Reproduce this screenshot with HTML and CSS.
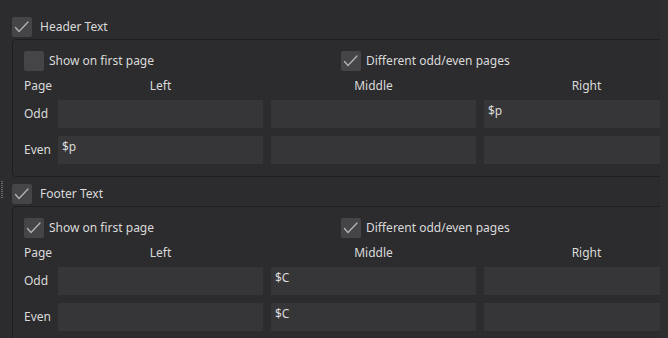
FILE: index.html
```html
<!DOCTYPE html>
<html>
<head>
<meta charset="utf-8">
<link rel="stylesheet" href="styles.css">
</head>
<body>
<div class="page">
  <div class="scroll">
    <section class="section">
      <div class="section-head">
        <span class="cb checked"><svg viewBox="0 0 20 20"><path d="M3.5 10.5 L7 14.5 L16 5"/></svg></span>
        <span class="label">Header Text</span>
      </div>
      <div class="group">
        <div class="options">
          <div class="opt first"><span class="cb"></span><span class="label">Show on first page</span></div>
          <div class="opt"><span class="cb checked"><svg viewBox="0 0 20 20"><path d="M3.5 10.5 L7 14.5 L16 5"/></svg></span><span class="label">Different odd/even pages</span></div>
        </div>
        <div class="grid">
          <div class="hdr page-col">Page</div>
          <div class="hdr">Left</div>
          <div class="hdr">Middle</div>
          <div class="hdr">Right</div>
          <div class="rowlabel">Odd</div>
          <div class="field"></div>
          <div class="field"></div>
          <div class="field">$p</div>
          <div class="rowlabel">Even</div>
          <div class="field">$p</div>
          <div class="field"></div>
          <div class="field"></div>
        </div>
      </div>
    </section>
    <section class="section footer">
      <div class="handle"></div>
      <div class="section-head">
        <span class="cb checked"><svg viewBox="0 0 20 20"><path d="M3.5 10.5 L7 14.5 L16 5"/></svg></span>
        <span class="label">Footer Text</span>
      </div>
      <div class="group">
        <div class="options">
          <div class="opt first"><span class="cb checked"><svg viewBox="0 0 20 20"><path d="M3.5 10.5 L7 14.5 L16 5"/></svg></span><span class="label">Show on first page</span></div>
          <div class="opt"><span class="cb checked"><svg viewBox="0 0 20 20"><path d="M3.5 10.5 L7 14.5 L16 5"/></svg></span><span class="label">Different odd/even pages</span></div>
        </div>
        <div class="grid">
          <div class="hdr page-col">Page</div>
          <div class="hdr">Left</div>
          <div class="hdr">Middle</div>
          <div class="hdr">Right</div>
          <div class="rowlabel">Odd</div>
          <div class="field"></div>
          <div class="field">$C</div>
          <div class="field"></div>
          <div class="rowlabel">Even</div>
          <div class="field"></div>
          <div class="field">$C</div>
          <div class="field"></div>
        </div>
      </div>
    </section>
  </div>
  <div class="strip"></div>
</div>
</body>
</html>
```
FILE: styles.css
```css
html, body {
  margin: 0;
  padding: 0;
  background: #2c2c2e;
}
body {
  width: 668px;
  height: 338px;
  overflow: hidden;
  font-family: "Noto Sans", "DejaVu Sans", sans-serif;
  font-size: 12px;
  color: #dadada;
}
.page {
  display: flex;
  height: 338px;
}
.scroll {
  width: 660px;
  flex: none;
  overflow: hidden;
  padding: 17px 0 0 12px;
  box-sizing: border-box;
}
.strip {
  width: 8px;
  flex: none;
  background: #2e2e30;
}
.section {
  position: relative;
  width: 690px;
}
.footer {
  margin-top: 7px;
}
.handle {
  position: absolute;
  left: -11px;
  top: -3px;
  width: 2px;
  height: 18px;
  background-image: repeating-linear-gradient(to bottom, #6a6a6c 0 1px, transparent 1px 2px);
}
.section-head {
  display: flex;
  align-items: center;
  height: 20px;
  gap: 8px;
}
.cb {
  width: 20px;
  height: 20px;
  flex: none;
  border-radius: 2px;
  background: #454547;
  display: block;
}
.cb svg {
  width: 20px;
  height: 20px;
  display: block;
}
.cb svg path {
  fill: none;
  stroke: #b4b4b4;
  stroke-width: 1.3;
  stroke-linecap: round;
  stroke-linejoin: round;
}
.label {
  line-height: 16px;
  white-space: nowrap;
}
.group {
  margin-top: 2px;
  border: 1px solid #1e1e20;
  border-radius: 4px;
  padding: 11px 11px 12px 11px;
}
.options {
  display: flex;
  height: 20px;
}
.opt {
  display: flex;
  align-items: center;
  gap: 5px;
}
.opt.first {
  width: 317px;
}
.grid {
  display: grid;
  grid-template-columns: 26px 205px 205px 205px;
  grid-template-rows: 21px 28px 28px;
  column-gap: 8px;
  row-gap: 8px;
}
.hdr {
  padding-top: 7px;
  line-height: 16px;
  height: 14px;
  text-align: center;
}
.hdr.page-col {
  text-align: left;
}
.rowlabel {
  display: flex;
  align-items: center;
  line-height: 16px;
}
.field {
  background: #363638;
  padding: 3px 4px 0 4px;
  line-height: 16px;
}
```
